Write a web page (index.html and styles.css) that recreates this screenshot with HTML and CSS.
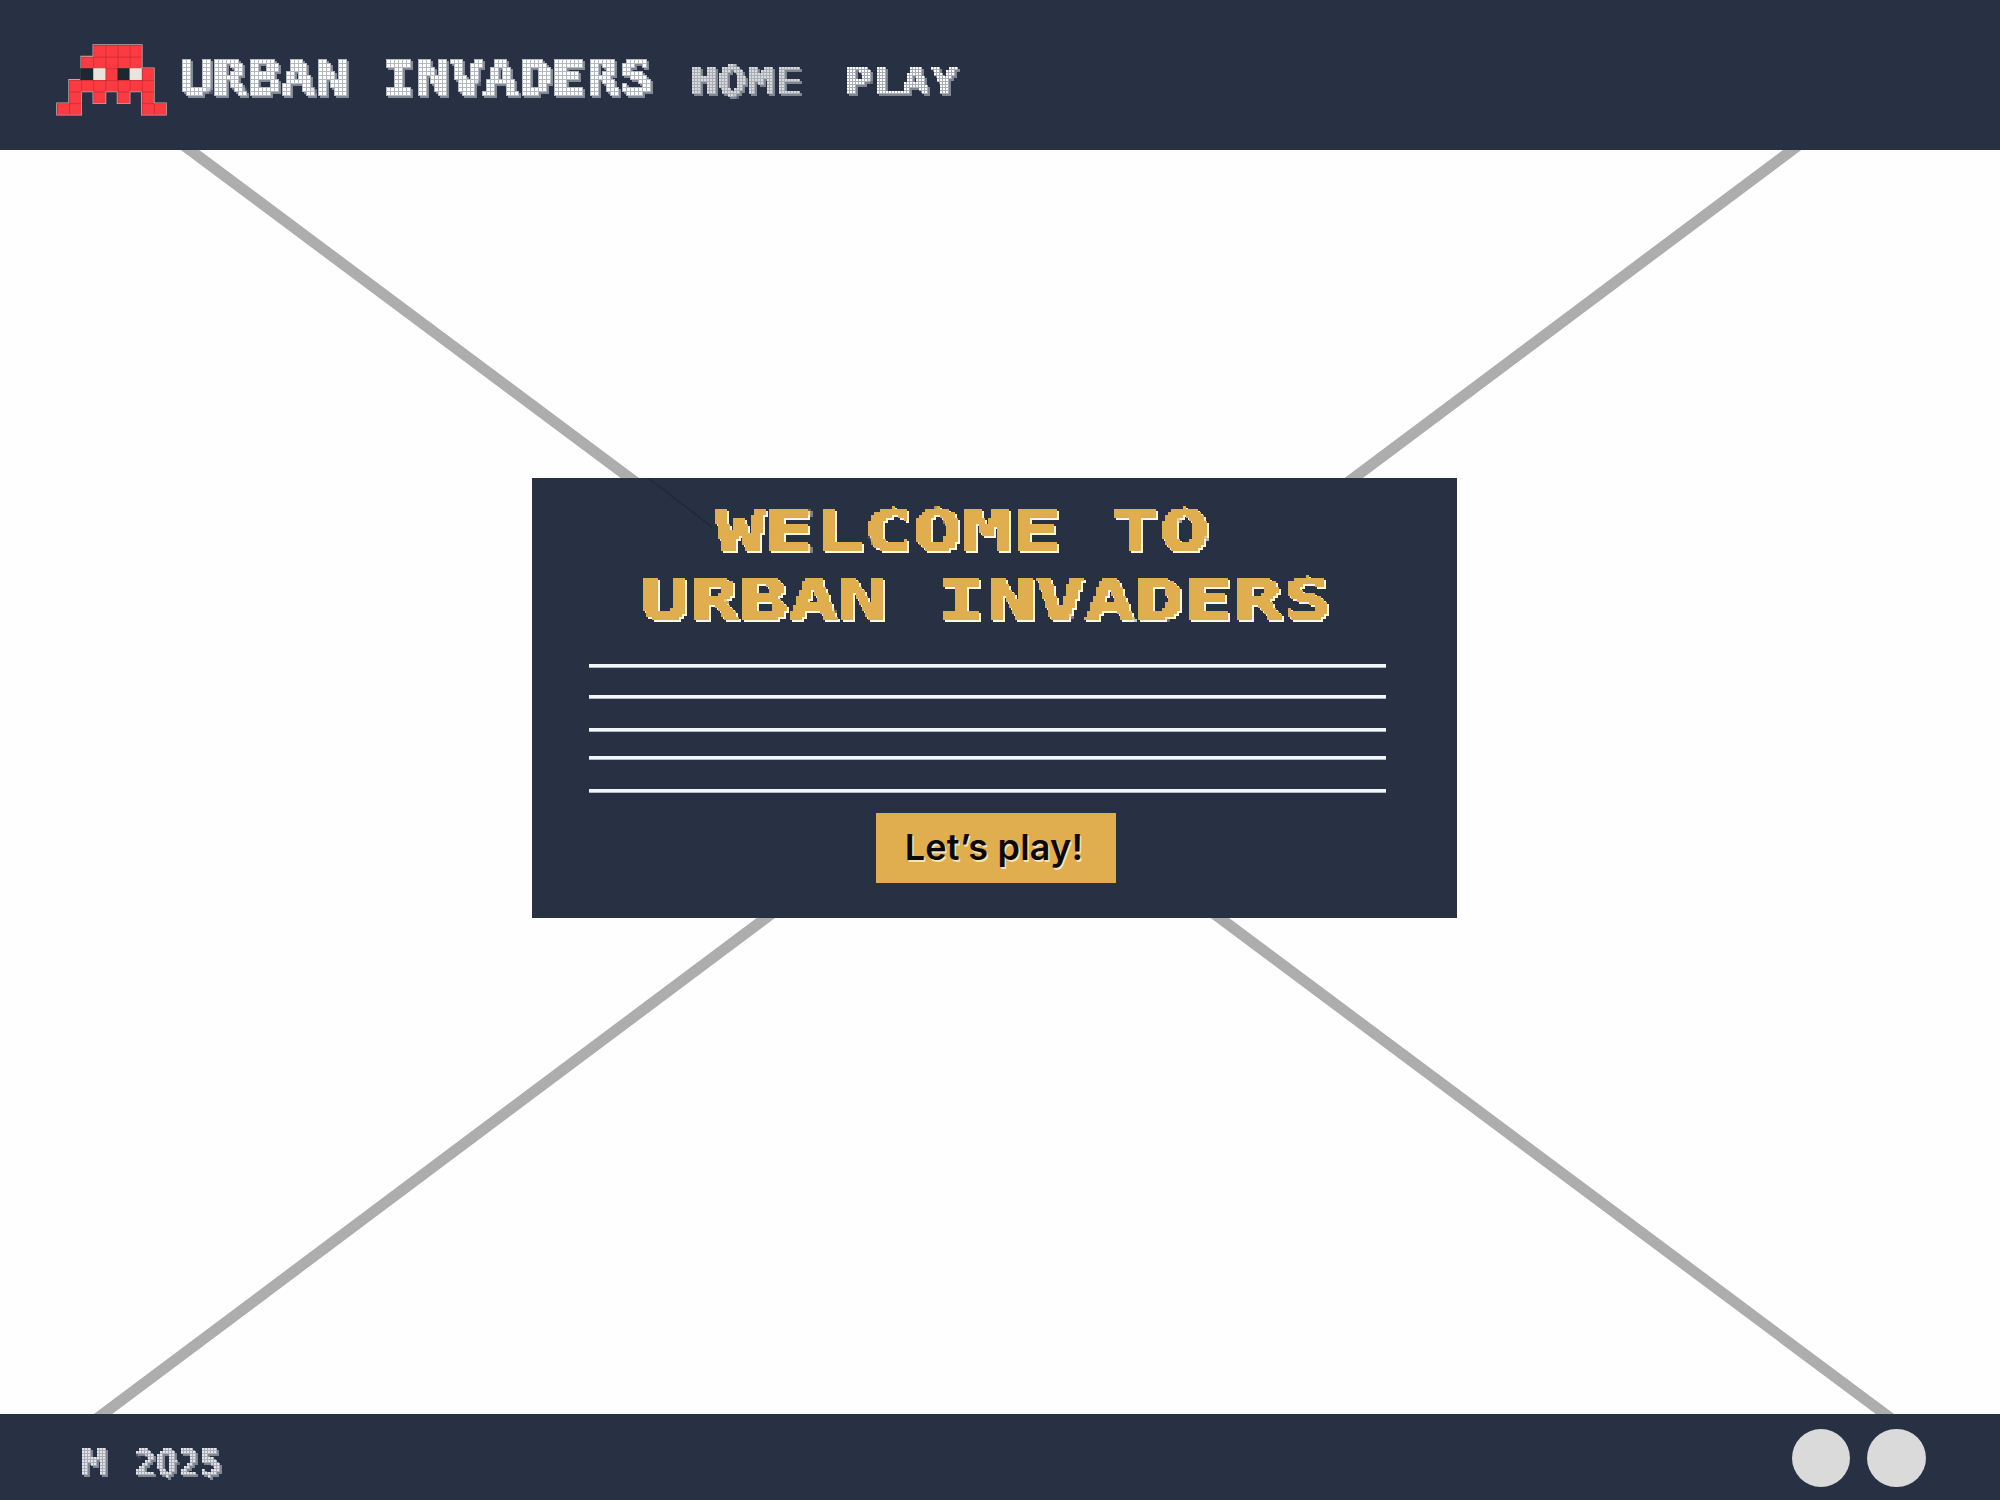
FILE: index.html
```html
<!DOCTYPE html>
<html lang="en">
<head>
<meta charset="utf-8">
<title>Urban Invaders</title>
<link rel="stylesheet" href="styles.css">
</head>
<body>
<svg class="defs" width="0" height="0" aria-hidden="true">
  <!-- small square tiles with a grey edge below -->
  <filter id="tiles" filterUnits="userSpaceOnUse" x="-8" y="-8" width="600" height="96" color-interpolation-filters="sRGB">
    <feFlood x="-7" y="-7" width="1" height="1" flood-color="#000" result="dot"/>
    <feOffset in="dot" dx="0" dy="0" x="-8" y="-8" width="4" height="4" result="cell"/>
    <feTile in="cell" result="grid"/>
    <feComposite in="SourceGraphic" in2="grid" operator="in"/>
    <feComponentTransfer result="pts"><feFuncA type="linear" slope="20" intercept="-8"/></feComponentTransfer>
    <feMorphology in="pts" operator="dilate" radius="1" result="tile"/>
    <feMorphology in="pts" operator="dilate" radius="2" result="solid"/>
    <feFlood flood-color="#b4b8c1"/>
    <feComposite in2="solid" operator="in" result="grout"/>
    <feFlood flood-color="#838995"/>
    <feComposite in2="solid" operator="in"/>
    <feOffset dx="2" dy="2" result="shade"/>
    <feMerge><feMergeNode in="shade"/><feMergeNode in="grout"/><feMergeNode in="tile"/></feMerge>
  </filter>
  <!-- finer tiles for the small labels -->
  <filter id="tiles-fine" filterUnits="userSpaceOnUse" x="-9" y="-9" width="300" height="75" color-interpolation-filters="sRGB">
    <feFlood x="-8" y="-8" width="1" height="1" flood-color="#000" result="dot"/>
    <feOffset in="dot" dx="0" dy="0" x="-9" y="-9" width="3" height="3" result="cell"/>
    <feTile in="cell" result="grid"/>
    <feComposite in="SourceGraphic" in2="grid" operator="in"/>
    <feComponentTransfer><feFuncA type="linear" slope="20" intercept="-8"/></feComponentTransfer>
    <feMorphology operator="dilate" radius="1" result="solid"/>
    <feFlood x="-9" y="-9" width="2" height="2" flood-color="#000" result="face"/>
    <feOffset in="face" dx="0" dy="0" x="-9" y="-9" width="3" height="3" result="facecell"/>
    <feTile in="facecell" result="faces"/>
    <feComposite in="solid" in2="faces" operator="in" result="tile"/>
    <feFlood flood-color="#a9adb7"/>
    <feComposite in2="solid" operator="in" result="grout"/>
    <feFlood flood-color="#7f8591"/>
    <feComposite in2="solid" operator="in"/>
    <feOffset dx="2" dy="2" result="shade"/>
    <feMerge><feMergeNode in="shade"/><feMergeNode in="grout"/><feMergeNode in="tile"/></feMerge>
  </filter>
  <!-- 3px blocks with a pale edge below -->
  <filter id="blocks" filterUnits="userSpaceOnUse" x="0" y="-9" width="930" height="180" color-interpolation-filters="sRGB">
    <feFlood x="1" y="-8" width="1" height="1" flood-color="#000" result="dot"/>
    <feOffset in="dot" dx="0" dy="0" x="0" y="-9" width="3" height="3" result="cell"/>
    <feTile in="cell" result="grid"/>
    <feComposite in="SourceGraphic" in2="grid" operator="in"/>
    <feComponentTransfer><feFuncA type="linear" slope="20" intercept="-8"/></feComponentTransfer>
    <feMorphology operator="dilate" radius="1" result="px"/>
    <feOffset in="px" dx="2" dy="2" result="low"/>
    <feFlood flood-color="#fff6e4"/>
    <feComposite in2="low" operator="in" result="edge"/>
    <feMerge><feMergeNode in="edge"/><feMergeNode in="px"/></feMerge>
  </filter>
</svg>

<header class="header">
  <svg class="invader" width="109" height="70" viewBox="0 0 108 71" preserveAspectRatio="none" aria-hidden="true">
    <defs>
      <pattern id="red" width="12" height="11.8" patternUnits="userSpaceOnUse">
        <rect width="12" height="11.8" fill="#c22a33"/><rect x=".7" y=".7" width="11.3" height="11.1" fill="#fb3a41"/>
      </pattern>
    </defs>
    <path class="invader-edge" d="M36 0H84V23.6H96V59H108V70.8H84V47.2H72V59H60V47.2H48V59H36V47.2H24V70.8H0V59H12V35.4H24V11.8H36Z"/>
    <path fill="url(#red)" d="M36 0H84V23.6H96V59H108V70.8H84V47.2H72V59H60V47.2H48V59H36V47.2H24V70.8H0V59H12V35.4H24V11.8H36Z"/>
    <path fill="#1c2830" d="M23 23.6H36V35.4H23ZM60 23.6H72V35.4H60Z"/>
    <path fill="#e9e4dc" d="M36 23.6H48V35.4H36ZM72 23.6H84V35.4H72Z"/>
  </svg>
  <div class="tiled brand"><span>URBAN INVADERS</span></div>
  <nav class="nav">
    <a class="tiled fine nav-item muted"><span>HOME</span></a>
    <a class="tiled fine nav-item"><span>PLAY</span></a>
  </nav>
</header>

<main class="hero">
  <svg class="cross" width="2000" height="1264" viewBox="0 0 2000 1264" aria-hidden="true">
    <path d="M176.600-10L1899.400 1274.800M1805.400-10L89.700 1274"/>
  </svg>
  <section class="card">
    <svg class="scratch" width="70" height="52" aria-hidden="true"><path d="M3 0L67 49"/></svg>
    <h1 class="title"><span class="title-top">WELCOME TO</span><span class="title-name">URBAN INVADERS</span></h1>
    <div class="lines"><i></i><i></i><i></i><i></i><i></i></div>
    <button class="play"><span>Let’s play!</span></button>
  </section>
</main>

<footer class="footer">
  <div class="tiled fine copy"><span class="copy-m">M</span><span class="copy-year">2025</span></div>
  <div class="dots"><i></i><i></i></div>
</footer>
</body>
</html>
```
FILE: styles.css
```css
* { box-sizing: border-box; }
body {
  margin: 0;
  width: 2000px;
  height: 1500px;
  display: flex;
  flex-direction: column;
  overflow: hidden;
  background: #fefefe;
  font-family: "DejaVu Sans Mono", monospace;
}
.defs { position: absolute; }

.header {
  height: 150px;
  flex: none;
  display: flex;
  align-items: flex-start;
  padding: 45px 0 0 57px;
  background: #283043;
}
.invader { flex: none; display: block; overflow: visible; }
.invader-edge { fill: none; stroke: #c9a5ae; stroke-width: 1.6; }

.tiled { filter: url(#tiles); font-weight: 700; color: #fff; white-space: pre; }
.fine { filter: url(#tiles-fine); }
.tiled span { display: inline-block; transform-origin: 0 50%; }

.brand { margin: 7px 0 0 13px; width: 494px; height: 52px; font-size: 48px; line-height: 50px; -webkit-text-stroke: .5px currentColor; }
.brand span { transform: scaleX(1.172); }

.nav { display: flex; gap: 35px; margin: 16px 0 0 16px; }
.nav-item { width: 120px; height: 44px; font-size: 39px; line-height: 42px; -webkit-text-stroke: .6px currentColor; }
.nav-item span { transform: scaleX(1.22); }
.muted { color: #dadada; }

.hero {
  height: 1264px;
  flex: none;
  display: grid;
  grid-template-columns: 532px 924.500px;
  grid-template-rows: 328px 440px;
}
.cross { grid-area: 1 / 1; width: 2000px; height: 1264px; }
.cross path { fill: none; stroke: #adadad; stroke-width: 11; }

.card {
  grid-area: 2 / 2;
  position: relative;
  display: flex;
  flex-direction: column;
  align-items: flex-start;
  background: #283043;
}
.scratch { position: absolute; left: 113px; top: 0; }
.scratch path { fill: none; stroke: #202838; stroke-width: 1.5; }

.title {
  margin: 19px 0 0;
  width: 924px;
  height: 138px;
  display: flex;
  flex-direction: column;
  filter: url(#blocks);
  color: #e0ae4e;
  font-size: 57px;
  line-height: 69px;
  white-space: pre;
  -webkit-text-stroke: 1.2px currentColor;
}
.title span { transform: scaleX(1.44); transform-origin: 0 50%; }
.title-top { margin-left: 183px; }
.title-name { margin-left: 108px; }

.lines { margin: 29px 0 0 57px; width: 797px; height: 129px; display: flex; flex-direction: column; }
.lines i { height: 4px; background: #f3f7fc; margin-bottom: 27px; flex: none; border-bottom: 1px solid #b4bac6; }
.lines i:nth-child(2) { margin-bottom: 29px; }
.lines i:nth-child(3) { margin-bottom: 24px; }
.lines i:nth-child(4) { margin-bottom: 29px; }
.lines i:nth-child(5) { margin-bottom: 0; }

.play {
  margin: 20px 0 0 344px;
  width: 240px;
  height: 70px;
  border: 0;
  padding: 0 4px 2px 0;
  background: #e0ae4e;
  color: #0c0806;
  font: 600 36px/1 Inter, "Open Sans", sans-serif;
  letter-spacing: .2px;
  text-shadow: 1.5px 2px 0 #f6e4bf;
}

.footer {
  height: 86px;
  flex: none;
  display: flex;
  justify-content: space-between;
  align-items: flex-start;
  padding: 14.500px 74.500px 0 79px;
  background: #283043;
}
.copy { display: flex; gap: 32px; margin-top: 13px; width: 160px; height: 44px; font-size: 38px; line-height: 42px; color: #e4e4e8; }
.copy-m { transform: scaleX(1.3); }
.copy-year { font-family: "DejaVu Sans", sans-serif; transform: scaleX(.83); }
.dots { display: flex; gap: 17px; }
.dots i { width: 58.500px; height: 58.500px; border-radius: 50%; background: #dadada; }
```
